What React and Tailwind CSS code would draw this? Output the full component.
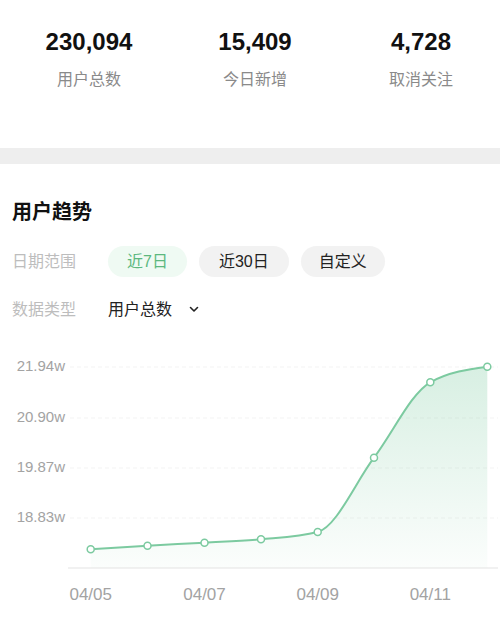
import React from 'react';

const font = { fontFamily: '"Liberation Sans", "Noto Sans CJK SC", sans-serif' };

const stats = [
  { value: '230,094', label: '用户总数' },
  { value: '15,409', label: '今日新增' },
  { value: '4,728', label: '取消关注' },
];

// 图表数据（像素坐标）
const points = [
  [90.7, 549.3],
  [147.5, 545.7],
  [204.5, 542.7],
  [261, 539.3],
  [317.7, 532],
  [374, 457.7],
  [430.3, 382.3],
  [487.3, 366.7],
];

const yTicks = [
  { y: 367, label: '21.94w' },
  { y: 418, label: '20.90w' },
  { y: 468, label: '19.87w' },
  { y: 518, label: '18.83w' },
];

const xTicks = [
  { x: 90.7, label: '04/05' },
  { x: 204.5, label: '04/07' },
  { x: 317.7, label: '04/09' },
  { x: 430.3, label: '04/11' },
];

// 单调三次插值，和 d3 curveMonotoneX 一样
function monotonePath(pts) {
  const n = pts.length;
  const s = [];
  for (let i = 0; i < n - 1; i++) {
    s.push((pts[i + 1][1] - pts[i][1]) / (pts[i + 1][0] - pts[i][0]));
  }
  const m = new Array(n);
  for (let i = 1; i < n - 1; i++) {
    const h0 = pts[i][0] - pts[i - 1][0];
    const h1 = pts[i + 1][0] - pts[i][0];
    const t = (s[i - 1] * h1 + s[i] * h0) / (h0 + h1);
    m[i] = (Math.sign(s[i - 1]) + Math.sign(s[i])) * Math.min(Math.abs(s[i - 1]), Math.abs(s[i]), 0.5 * Math.abs(t)) || 0;
  }
  m[0] = (3 * s[0] - m[1]) / 2;
  m[n - 1] = (3 * s[n - 2] - m[n - 2]) / 2;
  let d = `M${pts[0][0]},${pts[0][1]}`;
  for (let i = 0; i < n - 1; i++) {
    const [x0, y0] = pts[i];
    const [x1, y1] = pts[i + 1];
    const dx = (x1 - x0) / 3;
    d += ` C${x0 + dx},${y0 + dx * m[i]} ${x1 - dx},${y1 - dx * m[i + 1]} ${x1},${y1}`;
  }
  return d;
}

function TrendChart() {
  const line = monotonePath(points);
  const last = points[points.length - 1];
  const area = `${line} L${last[0]},568 L${points[0][0]},568 Z`;

  return (
    <svg className="block" width="500" height="288" viewBox="0 340 500 288" style={font}>
      <defs>
        <linearGradient id="fill" x1="0" y1="0" x2="0" y2="1">
          <stop offset="0%" stopColor="#7ccaa0" stopOpacity="0.3" />
          <stop offset="100%" stopColor="#7ccaa0" stopOpacity="0.03" />
        </linearGradient>
      </defs>
      {yTicks.map((t) => (
        <g key={t.label}>
          <line x1="70" x2="498" y1={t.y} y2={t.y} stroke="#f3f3f3" strokeWidth="1" strokeDasharray="4 3" />
          <text x="65" y={t.y} textAnchor="end" dominantBaseline="middle" fontSize="15" fill="#a3a3a3">
            {t.label}
          </text>
        </g>
      ))}
      <path d={area} fill="url(#fill)" />
      <line x1="68" x2="498" y1="568" y2="568" stroke="#e3e3e3" strokeWidth="1" />
      <path d={line} fill="none" stroke="#7ccaa0" strokeWidth="2" />
      {points.map(([x, y], i) => (
        <circle key={i} cx={x} cy={y} r="3.5" fill="#fff" stroke="#7ccaa0" strokeWidth="1.5" />
      ))}
      {xTicks.map((t) => (
        <text key={t.label} x={t.x} y="596" textAnchor="middle" dominantBaseline="middle" fontSize="17" fill="#a3a3a3">
          {t.label}
        </text>
      ))}
    </svg>
  );
}

export default function App() {
  return (
    <div className="w-[500px] h-[628px] bg-white overflow-hidden" style={font}>
      {/* 顶部统计 */}
      <div className="h-[148px] grid grid-cols-[166px_166px_166px] pl-[6px] pt-[28px]">
        {stats.map((s) => (
          <div key={s.label} className="flex flex-col items-center">
            <span className="text-[24px] leading-[28px] font-bold text-[#111]">{s.value}</span>
            <span className="mt-[13px] text-[16px] leading-[22px] text-[#8a8a8a]">{s.label}</span>
          </div>
        ))}
      </div>
      <div className="h-[16px] bg-[#eeeeee]" />

      {/* 用户趋势 */}
      <div className="px-[12px] pt-[34px]">
        <h2 className="text-[20px] leading-[28px] font-bold text-[#111]">用户趋势</h2>
        <div className="mt-[20px] flex items-center h-[31px]">
          <span className="w-[96px] text-[16px] text-[#bdbdbd]">日期范围</span>
          <div className="flex gap-[12px]">
            <button className="h-[31px] px-[19px] rounded-full bg-[#effaf3] text-[16px] text-[#5cb87f]">近7日</button>
            <button className="h-[31px] px-[20px] rounded-full bg-[#f2f2f2] text-[16px] text-[#222]">近30日</button>
            <button className="h-[31px] px-[18px] rounded-full bg-[#f2f2f2] text-[16px] text-[#222]">自定义</button>
          </div>
        </div>
        <div className="mt-[17px] flex items-center h-[31px]">
          <span className="w-[96px] text-[16px] text-[#bdbdbd]">数据类型</span>
          <span className="text-[16px] text-[#222]">用户总数</span>
          <svg className="ml-[17px]" width="10" height="7" viewBox="0 0 10 7" fill="none">
            <path d="M1.5 1.5 L5 5 L8.5 1.5" stroke="#222" strokeWidth="1.6" strokeLinecap="round" strokeLinejoin="round" />
          </svg>
        </div>
      </div>

      <div className="mt-[14.5px]">
        <TrendChart />
      </div>
    </div>
  );
}
